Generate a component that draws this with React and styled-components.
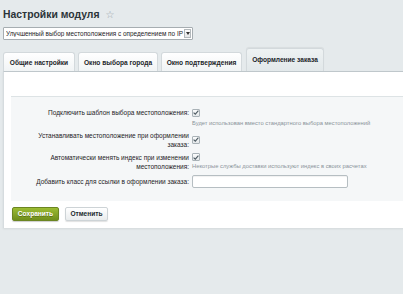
import React from "react";
import styled, { createGlobalStyle } from "styled-components";

const GlobalStyle = createGlobalStyle`
  html, body {
    margin: 0;
    padding: 0;
    background: #e5eaec;
    font-family: "Liberation Sans", Arial, sans-serif;
    color: #000;
  }
  * { box-sizing: border-box; }
`;

const tabs = [
  { title: "Общие настройки", width: 72 },
  { title: "Окно выбора города", width: 80 },
  { title: "Окно подтверждения", width: 81 },
  { title: "Оформление заказа", width: 78, active: true },
];

const App = () => {
  return (
    <>
      <GlobalStyle />
      <Page>
        <TitleRow>
          <Title>Настройки модуля</Title>
          <Star>☆</Star>
        </TitleRow>
        <Select>
          <SelectText>Улучшенный выбор местоположения с определением по IP</SelectText>
          <SelectArrow>
            <svg width="4" height="3" viewBox="0 0 4 3">
              <path d="M0 0h4L2 3z" fill="#333" />
            </svg>
          </SelectArrow>
        </Select>
        <Tabs>
          {tabs.map((t) => (
            <Tab key={t.title} $w={t.width} $active={t.active}>
              {t.title}
            </Tab>
          ))}
        </Tabs>
        <Panel>
          <Box>
            <Row>
              <Label>Подключить шаблон выбора местоположения:</Label>
              <Field>
                <Check />
                <Hint>Будет использован вместо стандартного выбора местоположений</Hint>
              </Field>
            </Row>
            <Row $center>
              <Label>
                Устанавливать местоположение при оформлении
                <br />
                заказа:
              </Label>
              <Field>
                <Check />
              </Field>
            </Row>
            <Row>
              <Label>
                Автоматически менять индекс при изменении
                <br />
                местоположения:
              </Label>
              <Field>
                <Check />
                <Hint $tight>Некотрые службы доставки используют индекс в своих расчетах</Hint>
              </Field>
            </Row>
            <Row $center>
              <Label>Добавить класс для ссылки в оформлении заказа:</Label>
              <Field>
                <TextInput />
              </Field>
            </Row>
          </Box>
          <Buttons>
            <SaveBtn>Сохранить</SaveBtn>
            <CancelBtn>Отменить</CancelBtn>
          </Buttons>
        </Panel>
      </Page>
    </>
  );
};

const Check = () => (
  <CheckBox>
    <svg width="6" height="5" viewBox="0 0 6 5">
      <path d="M0.6 2.6L2.3 4.2L5.4 0.6" fill="none" stroke="#4d5a62" strokeWidth="1.1" />
    </svg>
  </CheckBox>
);

const Page = styled.div`
  padding: 7px 0 0 3px;
  min-height: 294px;
  overflow: hidden;
`;

const TitleRow = styled.div`
  display: flex;
  align-items: center;
  height: 16px;
`;

const Title = styled.h1`
  margin: 0;
  font-size: 10.4px;
  line-height: 16px;
  font-weight: bold;
  color: #2b3338;
`;

const Star = styled.span`
  margin-left: 6px;
  font-size: 10px;
  line-height: 16px;
  color: #9aa5ab;
  font-family: "DejaVu Sans", sans-serif;
`;

const Select = styled.div`
  margin-top: 4px;
  width: 190px;
  height: 13px;
  display: flex;
  align-items: center;
  background: #fff;
  border: 1px solid #a6adb1;
  border-radius: 1px;
  padding-left: 2px;
`;

const SelectText = styled.span`
  flex: 1;
  font-size: 6.4px;
  color: #1e2326;
  white-space: nowrap;
  overflow: hidden;
`;

const SelectArrow = styled.span`
  width: 7px;
  height: 9px;
  margin-right: 1px;
  display: flex;
  align-items: center;
  justify-content: center;
  border: 1px solid #b3b9bc;
  background: linear-gradient(#fdfdfd, #e3e6e7);
`;

const Tabs = styled.div`
  display: flex;
  align-items: flex-end;
  gap: 3px;
  margin-top: 8px;
  height: 23px;
  position: relative;
  z-index: 1;
`;

const Tab = styled.div`
  width: ${(p) => p.$w}px;
  height: ${(p) => (p.$active ? 23 : 19)}px;
  margin-left: ${(p) => (p.$active ? 1 : 0)}px;
  display: flex;
  align-items: center;
  justify-content: center;
  padding-top: ${(p) => (p.$active ? 0 : 1)}px;
  padding-bottom: ${(p) => (p.$active ? 1 : 0)}px;
  font-size: 6.6px;
  font-weight: bold;
  color: #1d2529;
  white-space: nowrap;
  border: 1px solid #d3d9dc;
  border-bottom: none;
  border-radius: 3px 3px 0 0;
  background: ${(p) =>
    p.$active
      ? "linear-gradient(#eef2f3, #e2e8ea)"
      : "linear-gradient(#ffffff, #f1f4f5)"};
  box-shadow: ${(p) => (p.$active ? "0 -1px 1px rgba(0,0,0,0.06)" : "none")};
`;

const Panel = styled.div`
  width: calc(100% + 10px);
  background: #fff;
  border-top: 1px solid #bfc7cb;
  border-left: 1px solid #d6dcdf;
  padding: 24px 0 7px 7px;
  box-shadow: 0 1px 2px rgba(0, 0, 0, 0.08);
`;

const Box = styled.div`
  background: #f5f7f8;
  border-top: 1px solid #dde3e5;
  padding: 11px 0 13px;
  display: flex;
  flex-direction: column;
  gap: 4px;
`;

const Row = styled.div`
  display: flex;
  align-items: ${(p) => (p.$center ? "center" : "flex-start")};
`;

const Label = styled.div`
  width: 181px;
  padding-right: 3px;
  text-align: right;
  font-size: 6.5px;
  line-height: 9px;
  color: #1e2326;
`;

const Field = styled.div`
  display: flex;
  flex-direction: column;
  align-items: flex-start;
`;

const CheckBox = styled.span`
  width: 8px;
  height: 8px;
  margin-top: 0.5px;
  display: flex;
  align-items: center;
  justify-content: center;
  border: 1px solid #a9b2b7;
  border-radius: 1px;
  background: linear-gradient(#fbfcfc, #e4e8ea);
`;

const Hint = styled.div`
  margin-top: ${(p) => (p.$tight ? 0.5 : 2)}px;
  font-size: 5.8px;
  line-height: 8px;
  color: #8a9399;
  white-space: nowrap;
`;

const TextInput = styled.div`
  width: 156px;
  height: 13px;
  background: #fff;
  border: 1px solid #b6bec2;
  border-radius: 2px;
  box-shadow: inset 0 1px 1px rgba(0, 0, 0, 0.06);
`;

const Buttons = styled.div`
  display: flex;
  gap: 6px;
  padding: 6px 0 0 1px;
`;

const BaseBtn = styled.button`
  height: 14px;
  padding: 0;
  font-family: inherit;
  font-size: 6.6px;
  font-weight: bold;
  border-radius: 2px;
  display: flex;
  align-items: center;
  justify-content: center;
  cursor: pointer;
`;

const SaveBtn = styled(BaseBtn)`
  width: 47px;
  color: #fff;
  text-shadow: 0 1px 0 rgba(0, 0, 0, 0.3);
  border: 1px solid #6b8521;
  background: linear-gradient(#9cbc33, #6f8e1c);
  box-shadow: 0 1px 1px rgba(0, 0, 0, 0.2);
`;

const CancelBtn = styled(BaseBtn)`
  width: 43px;
  color: #222a2e;
  border: 1px solid #cdd3d6;
  background: linear-gradient(#ffffff, #e9eced);
  box-shadow: 0 1px 1px rgba(0, 0, 0, 0.12);
`;

export default App;
